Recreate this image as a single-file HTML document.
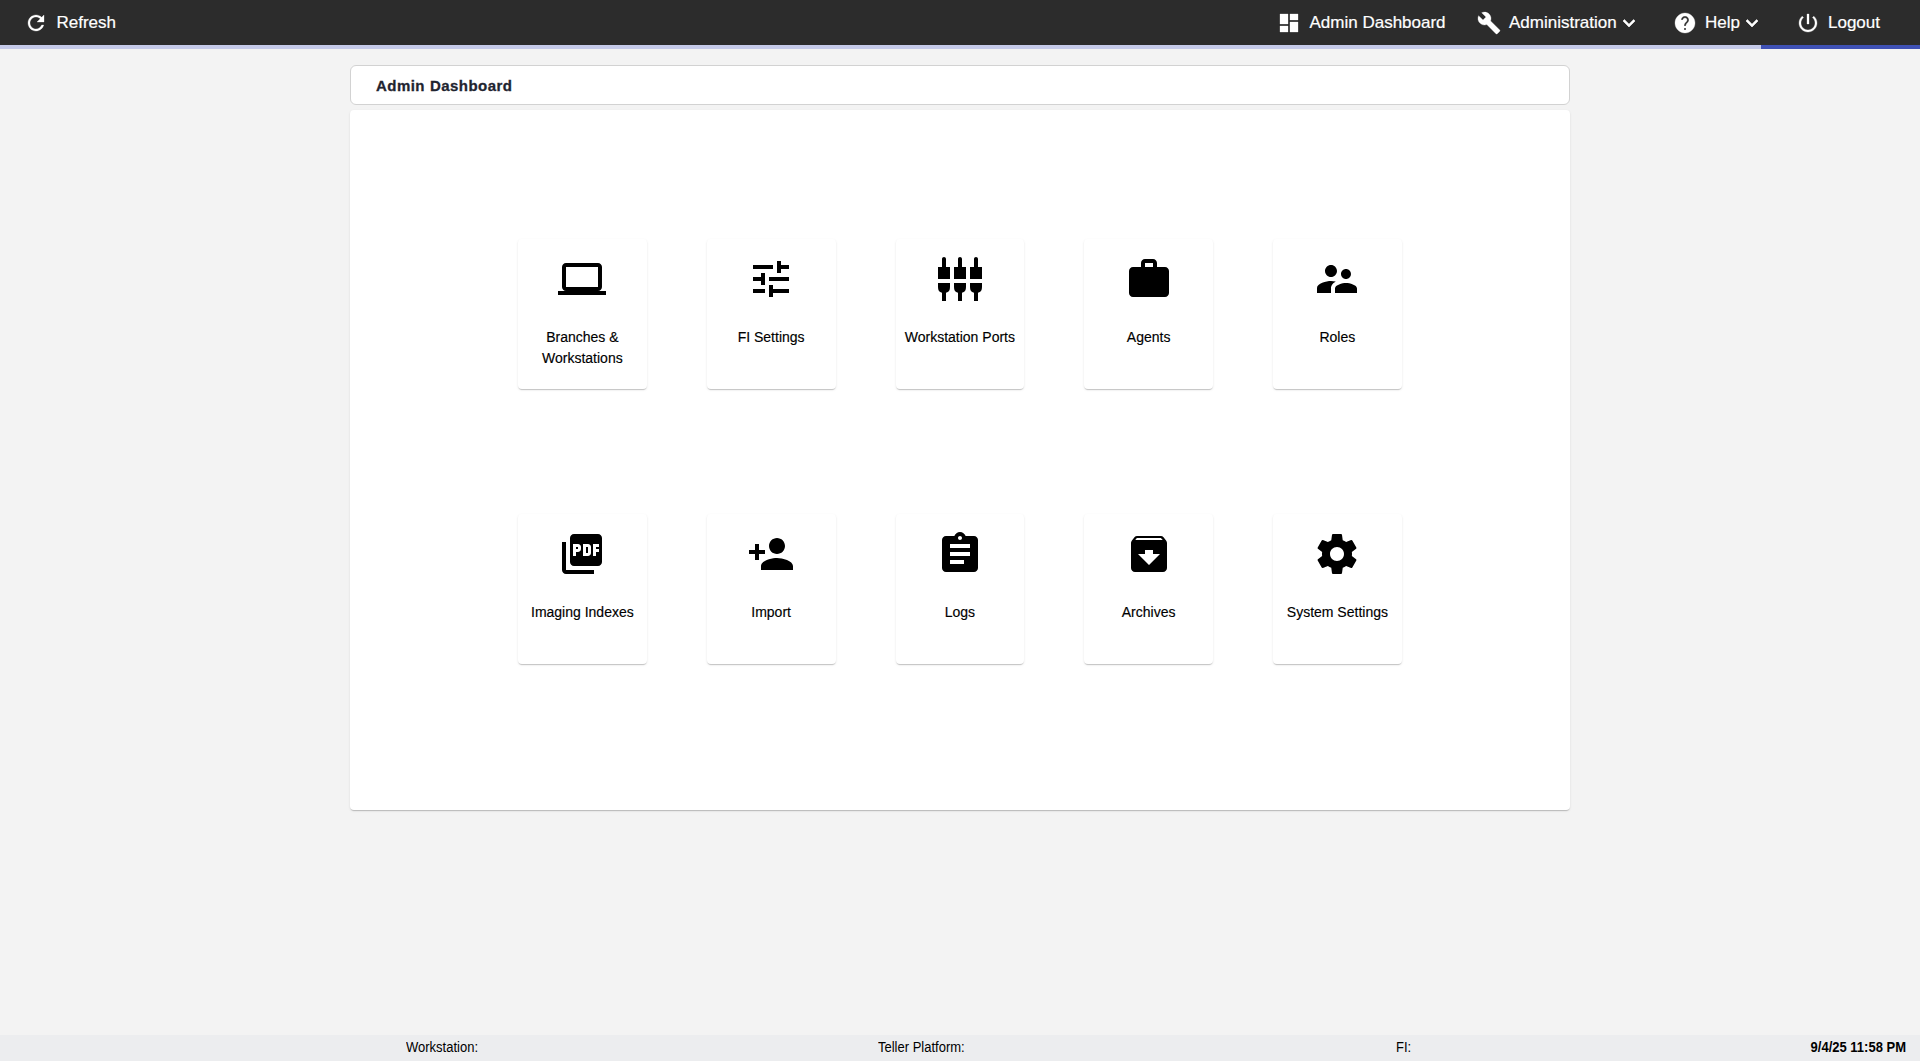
<!DOCTYPE html>
<html lang="en">
<head>
<meta charset="utf-8">
<title>Admin Dashboard</title>
<style>
*{box-sizing:border-box;margin:0;padding:0}
html,body{width:1920px;height:1061px;overflow:hidden}
body{background:#f3f3f3;font-family:"Liberation Sans",Arial,sans-serif;color:#000;position:relative}
svg{display:block}
.topbar{position:absolute;left:0;top:0;width:1920px;height:45px;background:#2c2c2c;color:#fff}
.tb{position:absolute;top:0;height:45px;display:flex;align-items:center;font-size:17px;white-space:nowrap;color:#fff}
.tb svg{width:24px;height:24px;fill:#fff;flex:none;stroke:#fff;stroke-width:.3px}
.tb .lbl{margin-left:8.5px;position:relative;top:0;-webkit-text-stroke:.2px #fff}
.tb .arr{margin-left:.5px;stroke:#fff;stroke-width:.6px}
.progress{position:absolute;left:0;top:45px;width:1920px;height:4px;background:#c5cae9}
.progress i{position:absolute;left:1761px;top:0;width:159px;height:4px;background:#3f51b5}
.titlecard{position:absolute;left:350px;top:65px;width:1220px;height:40px;background:#fff;border:1px solid #d2d2d2;border-radius:6px}
.titlecard h1{position:absolute;left:25px;top:1px;line-height:38px;font-size:15px;font-weight:bold;color:#1f2430;letter-spacing:.45px;word-spacing:.4px;-webkit-text-stroke:.3px #1f2430}
.panel{position:absolute;left:350px;top:110px;width:1220px;height:700px;background:#fff;border-radius:4px;box-shadow:0 2px 1px -1px rgba(0,0,0,.12),0 1px 1px 0 rgba(0,0,0,.085),0 1px 3px 0 rgba(0,0,0,.075)}
.card{position:absolute;width:128.75px;height:150px;background:#fff;border-radius:4px;box-shadow:0 2px 1px -1px rgba(0,0,0,.12),0 1px 1px 0 rgba(0,0,0,.085),0 1px 3px 0 rgba(0,0,0,.075);text-align:center}
.card svg{position:absolute;left:40.375px;top:16px;width:48px;height:48px;fill:#000}
.card span{position:absolute;left:0;right:0;top:88px;font-size:14px;line-height:21px;color:#000;-webkit-text-stroke:.15px #000}
.r1{top:129px}.r2{top:404px}
.c1{left:168px}.c2{left:356.75px}.c3{left:545.5px}.c4{left:734.25px}.c5{left:923px}
.footer{position:absolute;left:0;top:1035px;width:1920px;height:26px;background:#ecedef;font-size:13px;color:#000}
.footer span{position:absolute;top:0;line-height:26px;white-space:nowrap;transform:scaleY(1.08);transform-origin:0 17px}
</style>
</head>
<body>
<div class="topbar">
  <div class="tb" style="left:24px"><svg viewBox="0 0 24 24"><path d="M17.65 6.35C16.2 4.9 14.21 4 12 4c-4.42 0-7.99 3.58-7.99 8s3.57 8 7.99 8c3.73 0 6.84-2.55 7.73-6h-2.08c-.82 2.33-3.04 4-5.65 4-3.31 0-6-2.69-6-6s2.69-6 6-6c1.66 0 3.14.69 4.22 1.78L13 11h7V4l-2.35 2.35z"/></svg><span class="lbl">Refresh</span></div>
  <div class="tb" style="left:1277px"><svg viewBox="0 0 24 24"><path d="M3 13h8V3H3v10zm0 8h8v-6H3v6zm10 0h8V11h-8v10zm0-18v6h8V3h-8z"/></svg><span class="lbl">Admin Dashboard</span></div>
  <div class="tb" style="left:1476.5px"><svg viewBox="0 0 24 24"><path d="M22.7 19l-9.1-9.1c.9-2.3.4-5-1.500-6.900-2-2-5-2.400-7.400-1.300L9 6 6 9 1.600 4.700C.4 7.100.9 10.100 2.900 12.100c1.900 1.900 4.600 2.400 6.900 1.500l9.100 9.100c.4.4 1 .4 1.400 0l2.300-2.300c.5-.4.5-1.100.1-1.400z"/></svg><span class="lbl">Administration</span><svg class="arr" viewBox="0 0 24 24"><path d="M7.410 8.590L12 13.170l4.590-4.580L18 10l-6 6-6-6 1.410-1.410z"/></svg></div>
  <div class="tb" style="left:1672.5px"><svg viewBox="0 0 24 24"><path d="M12 2C6.480 2 2 6.480 2 12s4.480 10 10 10 10-4.480 10-10S17.520 2 12 2zm1 17h-2v-2h2v2zm2.070-7.750l-.9.920C13.450 12.900 13 13.500 13 15h-2v-.5c0-1.100.450-2.100 1.170-2.830l1.240-1.260c.370-.360.590-.860.590-1.410 0-1.100-.9-2-2-2s-2 .9-2 2H8c0-2.210 1.790-4 4-4s4 1.790 4 4c0 .880-.360 1.680-.930 2.250z"/></svg><span class="lbl">Help</span><svg class="arr" viewBox="0 0 24 24"><path d="M7.410 8.590L12 13.170l4.590-4.580L18 10l-6 6-6-6 1.410-1.410z"/></svg></div>
  <div class="tb" style="left:1795.5px"><svg viewBox="0 0 24 24"><path d="M13 3h-2v10h2V3zm4.830 2.170l-1.420 1.420C17.990 7.860 19 9.810 19 12c0 3.870-3.130 7-7 7s-7-3.130-7-7c0-2.190 1.010-4.140 2.580-5.420L6.170 5.170C4.230 6.820 3 9.260 3 12c0 4.970 4.030 9 9 9s9-4.030 9-9c0-2.740-1.230-5.180-3.170-6.830z"/></svg><span class="lbl">Logout</span></div>
</div>
<div class="progress"><i></i></div>

<div class="titlecard"><h1>Admin Dashboard</h1></div>

<div class="panel">
  <div class="card r1 c1"><svg viewBox="0 0 24 24"><path d="M20 18c1.100 0 1.990-.9 1.990-2L22 6c0-1.100-.9-2-2-2H4c-1.100 0-2 .9-2 2v10c0 1.100.9 2 2 2H0v2h24v-2h-4zM4 6h16v10H4V6z"/></svg><span>Branches &amp;<br>Workstations</span></div>
  <div class="card r1 c2"><svg viewBox="0 0 24 24"><path d="M3 17v2h6v-2H3zM3 5v2h10V5H3zm10 16v-2h8v-2h-8v-2h-2v6h2zM7 9v2H3v2h4v2h2V9H7zm14 4v-2H11v2h10zm-6-4h2V7h4V5h-4V3h-2v6z"/></svg><span>FI Settings</span></div>
  <div class="card r1 c3"><svg viewBox="0 0 24 24"><path d="M5 2c0-.55-.45-1-1-1s-1 .45-1 1v4H1v6h6V6h-2V2zM13 2c0-.55-.45-1-1-1s-1 .45-1 1v4H9v6h6V6h-2V2zM21 2c0-.55-.45-1-1-1s-1 .45-1 1v4H17v6h6V6h-2V2zM1 14h6v2c0 1.7-.6 2.55-2 2.82V23h-2v-4.18c-1.4-.27-2-1.12-2-2.82zM9 14h6v2c0 1.7-.6 2.55-2 2.82V23h-2v-4.18c-1.4-.27-2-1.12-2-2.82zM17 14h6v2c0 1.7-.6 2.55-2 2.82V23h-2v-4.18c-1.4-.27-2-1.12-2-2.82z"/></svg><span>Workstation Ports</span></div>
  <div class="card r1 c4"><svg viewBox="0 0 24 24"><path d="M20 6h-4V4c0-1.110-.890-2-2-2h-4c-1.110 0-2 .890-2 2v2H4c-1.110 0-1.990.890-1.990 2L2 19c0 1.110.890 2 2 2h16c1.110 0 2-.890 2-2V8c0-1.110-.890-2-2-2zm-6 0h-4V4h4v2z"/></svg><span>Agents</span></div>
  <div class="card r1 c5"><svg viewBox="0 0 24 24"><path d="M16.500 12c1.380 0 2.490-1.120 2.490-2.500S17.880 7 16.500 7C15.120 7 14 8.120 14 9.500s1.120 2.500 2.500 2.500zM9 11c1.660 0 2.990-1.340 2.990-3S10.660 5 9 5C7.340 5 6 6.340 6 8s1.340 3 3 3zm7.500 3c-1.830 0-5.500.920-5.500 2.750V19h11v-2.250c0-1.830-3.670-2.750-5.500-2.750zM9 13c-2.330 0-7 1.170-7 3.500V19h7v-2.250c0-.850.330-2.340 2.370-3.470C10.500 13.100 9.660 13 9 13z"/></svg><span>Roles</span></div>

  <div class="card r2 c1"><svg viewBox="0 0 24 24"><path d="M20 2H8c-1.100 0-2 .9-2 2v12c0 1.100.9 2 2 2h12c1.100 0 2-.9 2-2V4c0-1.100-.9-2-2-2zm-8.500 7.500c0 .830-.670 1.500-1.500 1.500H9v2H7.500V7H10c.830 0 1.500.670 1.500 1.500v1zm5 2c0 .830-.670 1.500-1.500 1.500h-2.500V7H15c.830 0 1.500.670 1.500 1.500v3zm4-3H19v1h1.500V11H19v2h-1.500V7h3v1.500zM9 9.500h1v-1H9v1zM4 6H2v14c0 1.100.9 2 2 2h14v-2H4V6zm10 5.500h1v-3h-1v3z"/></svg><span>Imaging Indexes</span></div>
  <div class="card r2 c2"><svg viewBox="0 0 24 24"><path d="M15 12c2.210 0 4-1.790 4-4s-1.790-4-4-4-4 1.790-4 4 1.790 4 4 4zm-9-2V7H4v3H1v2h3v3h2v-3h3v-2H6zm9 4c-2.670 0-8 1.340-8 4v2h16v-2c0-2.660-5.330-4-8-4z"/></svg><span>Import</span></div>
  <div class="card r2 c3"><svg viewBox="0 0 24 24"><path d="M19 3h-4.180C14.400 1.840 13.300 1 12 1c-1.300 0-2.400.840-2.820 2H5c-1.100 0-2 .9-2 2v14c0 1.100.9 2 2 2h14c1.100 0 2-.9 2-2V5c0-1.100-.9-2-2-2zm-7 0c.550 0 1 .450 1 1s-.450 1-1 1-1-.450-1-1 .450-1 1-1zm2 14H7v-2h7v2zm3-4H7v-2h10v2zm0-4H7V7h10v2z"/></svg><span>Logs</span></div>
  <div class="card r2 c4"><svg viewBox="0 0 24 24"><path d="M20.540 5.230l-1.390-1.680C18.880 3.210 18.470 3 18 3H6c-.470 0-.880.210-1.160.550L3.460 5.230C3.170 5.570 3 6.020 3 6.500V19c0 1.100.9 2 2 2h14c1.100 0 2-.9 2-2V6.500c0-.480-.170-.930-.460-1.270zM12 17.500L6.500 12H10v-2h4v2h3.500L12 17.500zM5.120 5l.810-1h12l.940 1H5.120z"/></svg><span>Archives</span></div>
  <div class="card r2 c5"><svg viewBox="0 0 24 24"><path d="M19.43 12.98c.04-.32.07-.64.07-.98s-.03-.66-.07-.98l2.11-1.65c.19-.15.24-.42.12-.64l-2-3.46c-.12-.22-.39-.3-.61-.22l-2.49 1c-.52-.4-1.08-.73-1.69-.98l-.38-2.65C14.46 2.180 14.25 2 14 2h-4c-.25 0-.46.18-.49.42l-.38 2.65c-.61.25-1.170.59-1.690.98l-2.490-1c-.23-.09-.49 0-.61.22l-2 3.460c-.13.22-.07.49.12.64l2.110 1.650c-.04.32-.07.65-.07.98s.03.660.07.980l-2.110 1.650c-.19.150-.24.420-.12.640l2 3.460c.12.220.39.3.61.220l2.490-1c.52.4 1.080.730 1.690.980l.38 2.650c.03.240.24.420.49.420h4c.25 0 .46-.18.49-.42l.38-2.650c.61-.25 1.170-.59 1.690-.98l2.490 1c.23.09.49 0 .61-.22l2-3.460c.12-.22.07-.49-.12-.64l-2.110-1.650zM12 15.5c-1.930 0-3.500-1.570-3.500-3.500s1.570-3.500 3.500-3.500 3.500 1.570 3.500 3.500-1.570 3.500-3.500 3.500z"/></svg><span>System Settings</span></div>
</div>

<div class="footer">
  <span style="left:406px">Workstation:</span>
  <span style="left:878px">Teller Platform:</span>
  <span style="left:1396px">FI:</span>
  <span style="right:14px;font-weight:bold">9/4/25 11:58 PM</span>
</div>
</body>
</html>
